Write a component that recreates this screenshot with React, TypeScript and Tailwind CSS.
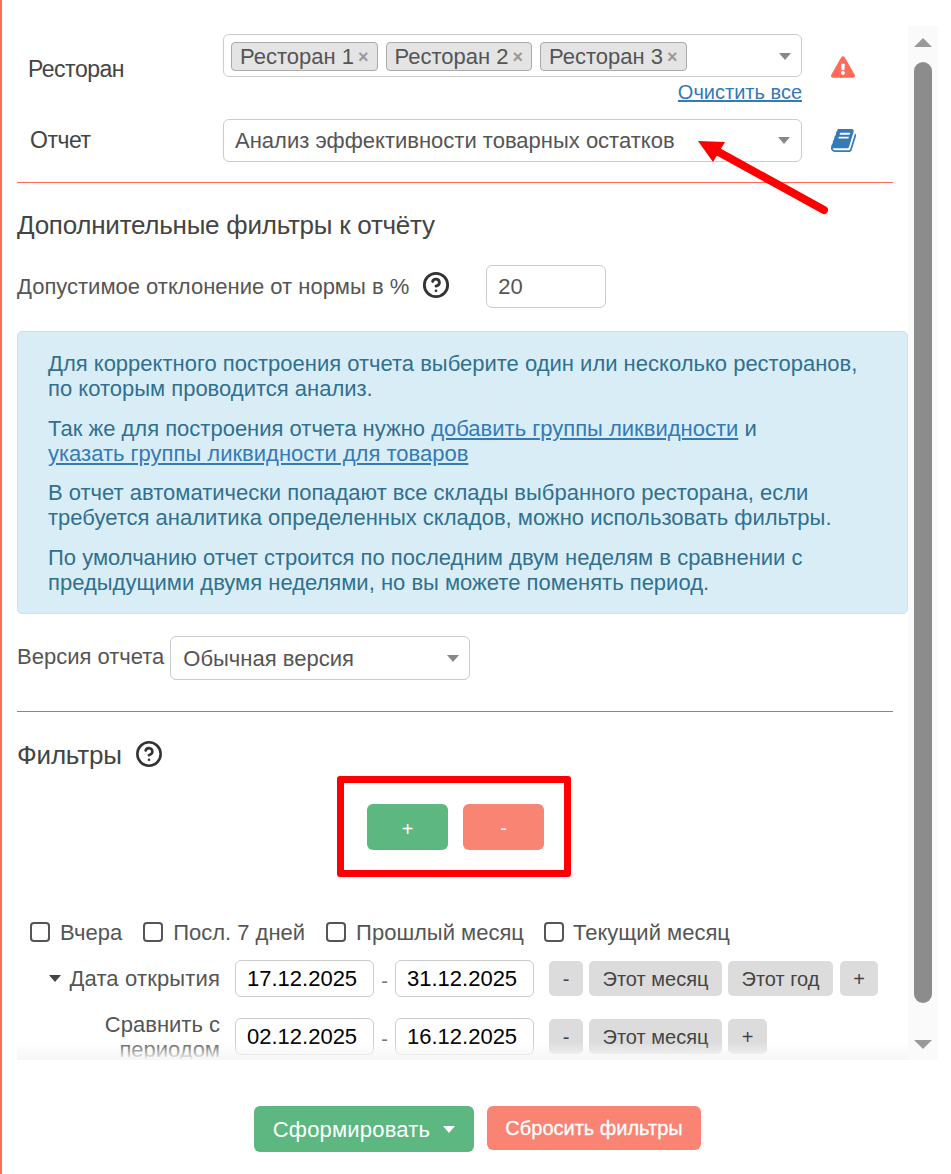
// Форма параметров отчёта с фильтрами и пометками поверх скриншота.
import { CircleHelp } from "lucide-react";
import { FaExclamationTriangle } from "react-icons/fa";

const inputClass = "h-[37px] w-[139px] rounded-md border border-[#ccc] bg-white px-[11px] text-[22px] text-black outline-none";
const greyButton = "flex h-[35px] items-center justify-center rounded-[5px] bg-[#dcdcdc] text-[20px] text-[#444]";
const checkboxClass = "h-[20px] w-[20px] appearance-none rounded-[4px] border-2 border-[#555]";

function Caret({ className }: { className: string }): JSX.Element {
  return <span className={`h-0 w-0 border-x-[6px] border-t-[7px] border-x-transparent ${className}`} />;
}

function BookIcon(): JSX.Element {
  return (
    <svg viewBox="0 0 1792 1792" className="h-[27px] w-[27px] fill-[#337ab7]">
      <path d="M1639 478q40 57 18 129l-275 906q-19 64-76.5 107.5t-122.5 43.5h-923q-77 0-148.5-53.5t-99.5-131.5q-24-67-2-127 0-4 3-27t4-37q1-8-3-21.5t-3-19.5q2-11 8-21t16.5-23.5 16.5-23.5q23-38 45-91.5t30-91.5q3-10 .5-30t-.5-28q3-11 17-28t17-23q21-36 42-92t25-90q1-9-2.5-32t.5-28q4-13 22-30.5t22-22.5q19-26 42.5-84.5t27.5-96.5q1-8-3-25.5t-2-26.5q2-8 9-18t18-23 17-21q8-12 16.5-30.5t15-35 16-36 19.5-32 26.5-23.5 36-11.5 47.5 5.5l-1 3q38-9 51-9h761q74 0 114 56t18 130l-274 906q-36 119-71.5 153.5t-128.5 34.5h-869q-27 0-38 15-11 16-1 43 24 70 144 70h923q29 0 56-15.5t35-41.5l300-987q7-22 5-57 38 15 59 43zm-1064 2q-4 13 2 22.5t20 9.5h608q13 0 25.5-9.5t16.5-22.5l21-64q4-13-2-22.5t-20-9.5h-608q-13 0-25.5 9.5t-16.5 22.5zm-83 256q-4 13 2 22.5t20 9.5h608q13 0 25.5-9.5t16.5-22.5l21-64q4-13-2-22.5t-20-9.5h-608q-13 0-25.5 9.5t-16.5 22.5z" />
    </svg>
  );
}

function Chip({ label }: { label: string }): JSX.Element {
  return (
    <span className="flex h-[29px] w-[146.5px] items-center gap-[4px] whitespace-nowrap rounded-[4px] border border-[#aaa] bg-[#e4e4e4] pl-[8px] text-[22px] text-[#555]">
      {label}
      <span className="text-[18px] font-bold leading-none text-[#999]">×</span>
    </span>
  );
}

function DateRow({ from, to, compare, children }: { from: string; to: string; compare?: boolean; children: React.ReactNode }): JSX.Element {
  return (
    <div className="flex items-start">
      <div className={`flex w-[203px] justify-end pl-[53px] text-right text-[22px] leading-[25px] text-[#555] ${compare ? "-mt-[6px]" : "items-center gap-[8px] pt-[6px]"}`}>
        {compare ? (
          <span>Сравнить с периодом сравнения</span>
        ) : (
          <>
            <Caret className="border-x-[6px] border-t-[6px] border-t-[#444]" />
            <span className="whitespace-nowrap tracking-[0.15px]">Дата открытия</span>
          </>
        )}
      </div>
      <input readOnly value={from} className={`ml-[15px] ${inputClass}`} />
      <span className="w-[21px] pt-[6px] text-center text-[20px] text-[#777]">-</span>
      <input readOnly value={to} className={inputClass} />
      <div className="ml-[15px] flex gap-[6px] pt-[1px]">{children}</div>
    </div>
  );
}

export default function App(): JSX.Element {
  return (
    <div className="relative h-[1174px] border-l-2 border-[#ff6a59] bg-white font-['Liberation_Sans',sans-serif] text-[#444]">
      <div className="relative flex h-[1060px] overflow-hidden">
        <main className="w-[906px] shrink-0 pl-[15px] pt-[34px]">
          <div className="mr-[15px] flex items-start">
            <div className="w-[206px] pl-[11px] pt-[18px] text-[23px] tracking-[-0.5px] text-[#444]">Ресторан</div>
            <div className="w-[579px]">
              <div className="flex h-[43px] items-start gap-[8px] rounded-md border border-[#ccc] pl-[7px] pt-[7px] pr-[10px]">
                <Chip label="Ресторан 1" />
                <Chip label="Ресторан 2" />
                <Chip label="Ресторан 3" />
                <Caret className="ml-auto mt-[11px] border-t-[#888]" />
              </div>
              <div className="mt-[3px] text-right text-[20px] leading-[25px] text-[#337ab7] underline">Очистить все</div>
            </div>
            <FaExclamationTriangle className="ml-[29px] mt-[21px] h-[24px] w-[24px] text-[#ff6a59]" />
          </div>

          <div className="mr-[15px] mt-[14px] flex items-center border-b border-[#ff6a59] pb-[20px]">
            <div className="w-[206px] pl-[13px] text-[23px] tracking-[-0.5px]">Отчет</div>
            <div className="flex h-[43px] w-[579px] items-center justify-between rounded-md border border-[#ccc] px-[11px] text-[22px] text-[#555]">
              Анализ эффективности товарных остатков
              <Caret className="border-t-[#888]" />
            </div>
            <span className="ml-[29px]">
              <BookIcon />
            </span>
          </div>

          <h2 className="mt-[27px] text-[26px] leading-[30px] tracking-[-0.25px] text-[#444]">Дополнительные фильтры к отчёту</h2>

          <div className="mt-[25px] flex items-center text-[22px] text-[#555]">
            <span className="whitespace-nowrap">Допустимое отклонение от нормы в %</span>
            <CircleHelp className="ml-[13px] h-[28px] w-[28px] -translate-y-[2px] text-[#333]" strokeWidth={2.4} />
            <div className="ml-[36px] flex h-[43px] w-[120px] items-center rounded-md border border-[#ccc] px-[11px]">20</div>
          </div>

          <div className="mt-[23px] flex h-[283px] flex-col gap-[14.5px] rounded-[5px] border border-[#bce8f1] bg-[#d9edf7] pl-[30px] pr-[20px] pt-[19px] text-[22px] leading-[25px] text-[#31708f]">
            <p>Для корректного построения отчета выберите один или несколько ресторанов, по которым проводится анализ.</p>
            <p>
              Так же для построения отчета нужно <span className="text-[#337ab7] underline">добавить группы ликвидности</span> и<br />
              <span className="text-[#337ab7] underline">указать группы ликвидности для товаров</span>
            </p>
            <p>В отчет автоматически попадают все склады выбранного ресторана, если требуется аналитика определенных складов, можно использовать фильтры.</p>
            <p>По умолчанию отчет строится по последним двум неделям в сравнении с предыдущими двумя неделями, но вы можете поменять период.</p>
          </div>

          <div className="mt-[22px] flex items-center gap-[6px] text-[22px] text-[#555]">
            <span className="-translate-y-[2px] whitespace-nowrap">Версия отчета</span>
            <div className="flex h-[44px] w-[300px] items-center justify-between rounded-md border border-[#ccc] pl-[12px] pr-[10px]">
              Обычная версия
              <Caret className="border-t-[#888]" />
            </div>
          </div>

          <hr className="mr-[15px] mt-[31px] border-[#888]" />

          <div className="mt-[28px] flex items-center gap-[13px] text-[26px] leading-[30px] tracking-[-0.2px] text-[#444]">
            Фильтры
            <CircleHelp className="h-[28px] w-[28px] -translate-y-[1px] text-[#333]" strokeWidth={2.2} />
          </div>

          <div className="ml-[320px] mt-[6px] flex h-[101px] w-[234px] items-center justify-center gap-[15px] rounded-[3px] border-[7px] border-[#ff0000] pl-[3px]">
            <div className="flex h-[46px] w-[81px] items-center justify-center rounded-[6px] bg-[#5cb780] pt-[4px] text-[20px] text-white">+</div>
            <div className="flex h-[46px] w-[81px] items-center justify-center rounded-[6px] bg-[#f98473] pt-[2px] text-[20px] text-white">-</div>
          </div>

          <div className="ml-[13px] mt-[41px] flex h-[28px] items-center text-[22px] text-[#555]">
            <input type="checkbox" readOnly className={checkboxClass} />
            <span className="ml-[10px]">Вчера</span>
            <input type="checkbox" readOnly className={`ml-[21px] ${checkboxClass}`} />
            <span className="ml-[10px]">Посл. 7 дней</span>
            <input type="checkbox" readOnly className={`ml-[21px] ${checkboxClass}`} />
            <span className="ml-[10px]">Прошлый месяц</span>
            <input type="checkbox" readOnly className={`ml-[20px] ${checkboxClass}`} />
            <span className="ml-[9px]">Текущий месяц</span>
          </div>

          <div className="mt-[14px] flex flex-col gap-[21px]">
            <DateRow from="17.12.2025" to="31.12.2025">
              <div className={`${greyButton} w-[34px]`}>-</div>
              <div className={`${greyButton} w-[133px]`}>Этот месяц</div>
              <div className={`${greyButton} w-[105px]`}>Этот год</div>
              <div className={`${greyButton} ml-[1px] w-[38px]`}>+</div>
            </DateRow>
            <DateRow from="02.12.2025" to="16.12.2025" compare>
              <div className={`${greyButton} w-[34px]`}>-</div>
              <div className={`${greyButton} w-[133px]`}>Этот месяц</div>
              <div className={`${greyButton} w-[39px]`}>+</div>
            </DateRow>
          </div>
        </main>

        <aside className="mt-[26px] flex w-[30px] shrink-0 flex-col items-center bg-[#fafafa] pt-[12px]">
          <span className="h-0 w-0 border-x-[9px] border-b-[9px] border-x-transparent border-b-[#999]" />
          <div className="mt-[15px] h-[941px] w-[18px] rounded-[9px] bg-[#8c8c8c]" />
          <span className="mt-[37px] h-0 w-0 border-x-[9px] border-t-[9px] border-x-transparent border-t-[#999]" />
        </aside>

        <div className="absolute bottom-0 left-[15px] h-[18px] w-[891px] bg-linear-to-b from-white/0 to-[#f6f6f6]" />
      </div>

      <div className="flex items-start justify-center gap-[13px] pl-[2px] pt-[46px]">
        <div className="flex h-[46px] w-[220px] items-center justify-center gap-[13px] rounded-[6px] bg-[#5cb780] text-[22px] tracking-[0.2px] text-white">
          Сформировать
          <Caret className="border-x-[6px] border-t-[5px] border-t-white" />
        </div>
        <div className="flex h-[44px] w-[214px] items-center justify-center rounded-[6px] bg-[#f98473] text-[20px] text-white [-webkit-text-stroke:0.3px_white]">Сбросить фильтры</div>
      </div>

      {/* стрелка-пометка поверх формы */}
      <svg className="pointer-events-none absolute left-[-2px] top-0 h-[240px] w-[951px]" viewBox="0 0 951 240">
        <line x1="824" y1="210" x2="715" y2="150" stroke="#ff0000" strokeWidth="8" strokeLinecap="round" />
        <polygon points="698,141 725,142 713,162" fill="#ff0000" />
      </svg>
    </div>
  );
}
